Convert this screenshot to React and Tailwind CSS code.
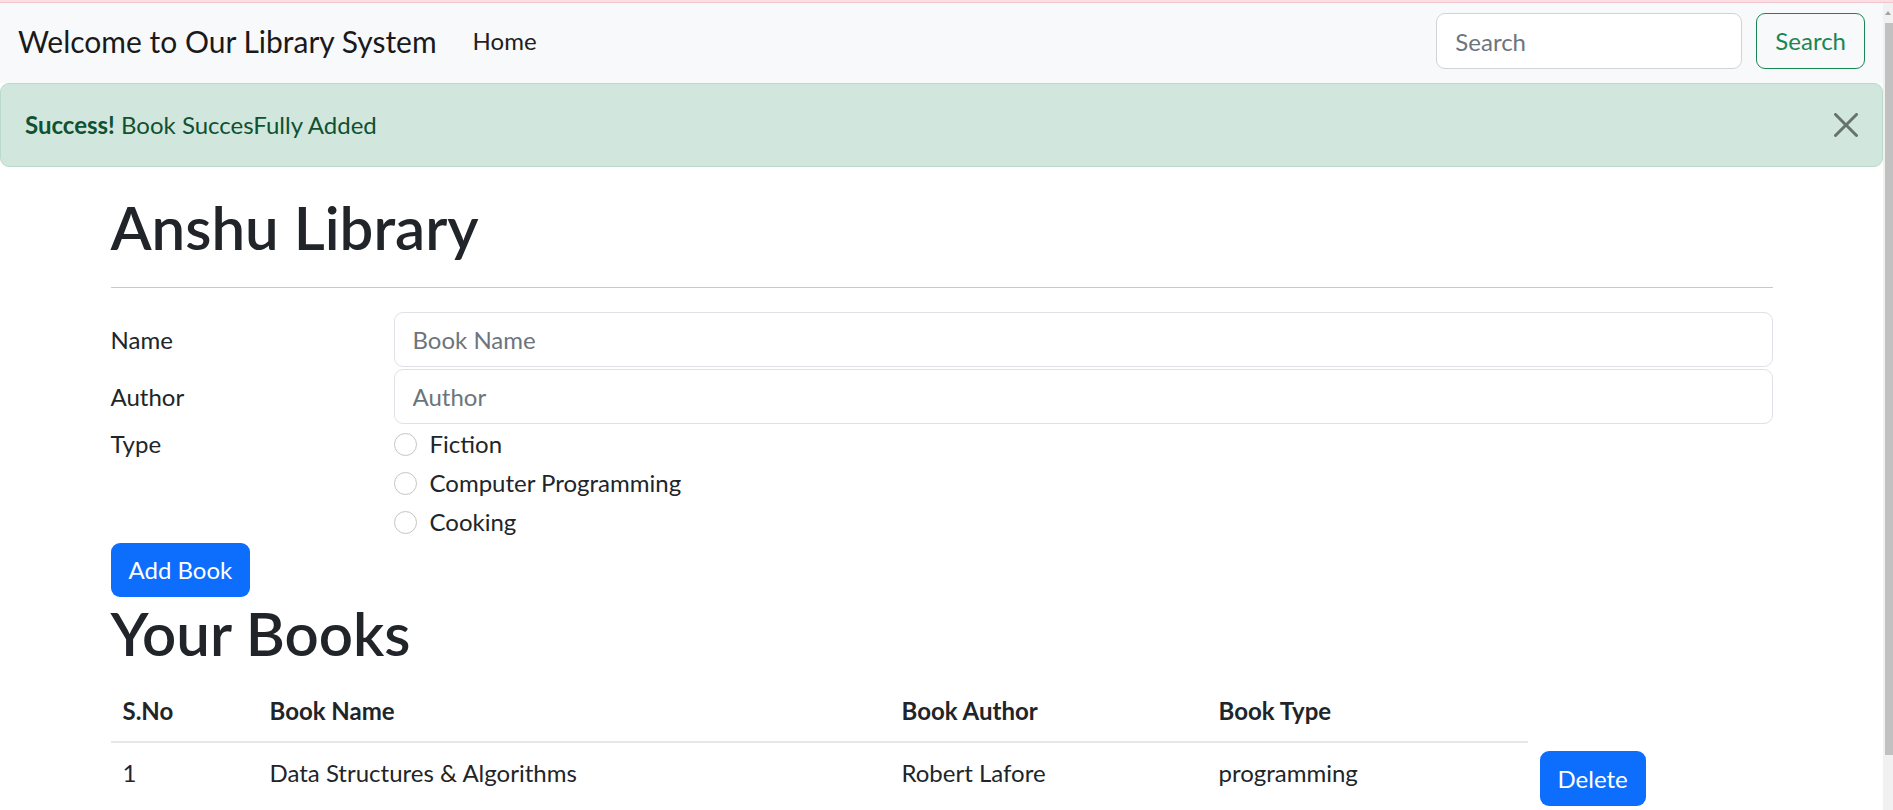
import React from 'react';

const books = [
  { name: 'Data Structures & Algorithms', author: 'Robert Lafore', type: 'programming' },
];

const types = ['Fiction', 'Computer Programming', 'Cooking'];

function CloseIcon() {
  return (
    <svg viewBox="0 0 16 16" className="w-[24px] h-[24px]" fill="currentColor">
      <path d="M.293.293a1 1 0 011.414 0L8 6.586 14.293.293a1 1 0 111.414 1.414L9.414 8l6.293 6.293a1 1 0 01-1.414 1.414L8 9.414l-6.293 6.293a1 1 0 01-1.414-1.414L6.586 8 .293 1.707a1 1 0 010-1.414z" />
    </svg>
  );
}

export default function App() {
  return (
    <div className="h-[810px] overflow-hidden flex flex-col bg-white text-[#212529] font-['Lato',sans-serif]">
      <div className="h-[3px] shrink-0 bg-[#fbdde2] border-b border-[#efc6cd]" />
      <div className="flex flex-1 min-h-0">
        <div className="flex-1 min-w-0">
          {/* navbar */}
          <nav className="h-[80px] bg-[#f8f9fa] px-[18px] pt-[10px] pb-[14px] flex items-center justify-between">
            <div className="flex items-center">
              <span className="text-[30px] leading-[45px] text-[#1a1a1a] mr-[24px]">Welcome to Our Library System</span>
              <a className="text-[24px] leading-[36px] px-[12px] text-[#1f1f1f]">Home</a>
            </div>
            <form className="flex items-center">
              <input
                placeholder="Search"
                className="w-[306px] h-[56px] px-[18px] text-[24px] bg-white border border-[#ced4da] rounded-[9px] placeholder:text-[#6c757d] outline-none"
              />
              <button type="button" className="ml-[14px] h-[56px] px-[18px] text-[24px] text-[#198754] border border-[#198754] rounded-[9px]">
                Search
              </button>
            </form>
          </nav>

          {/* alert */}
          <div className="h-[84px] bg-[#d1e7dd] border border-[#badbcc] rounded-[9px] text-[#0f5132] text-[24px] flex items-center justify-between pl-[24px] pr-[24px]">
            <div>
              <strong className="font-bold">Success!</strong> Book SuccesFully Added
            </div>
            <button type="button" className="text-[#000] opacity-50">
              <CloseIcon />
            </button>
          </div>

          {/* main */}
          <div className="w-[1662px] mx-auto pt-[24px] text-[24px] leading-[36px]">
            <h1 className="text-[60px] leading-[72px] font-semibold mb-[12px]">Anshu Library</h1>
            <hr className="border-t border-[#c8c9ca] my-[24px]" />

            <div className="flex items-start mb-[2px]">
              <label className="w-[283px] pt-[10px] pb-[9px]">Name</label>
              <input placeholder="Book Name" className="flex-1 h-[55px] px-[18px] text-[24px] border border-[#dee2e6] rounded-[9px] placeholder:text-[#6c757d] outline-none" />
            </div>
            <div className="flex items-start mb-[2px]">
              <label className="w-[283px] pt-[10px] pb-[9px]">Author</label>
              <input placeholder="Author" className="flex-1 h-[55px] px-[18px] text-[24px] border border-[#dee2e6] rounded-[9px] placeholder:text-[#6c757d] outline-none" />
            </div>
            <div className="flex items-start">
              <span className="w-[283px]">Type</span>
              <div className="flex-1 flex flex-col">
                {types.map((t) => (
                  <label key={t} className="flex items-center h-[36px] mb-[3px]">
                    <span className="w-[23px] h-[23px] rounded-full border border-[#c4c4c4] bg-white mr-[13px]" />
                    {t}
                  </label>
                ))}
              </div>
            </div>

            <button type="button" className="h-[54px] px-[18px] bg-[#0d6efd] text-white rounded-[9px]">Add Book</button>

            <h1 className="text-[60px] leading-[72px] font-semibold mb-[12px]">Your Books</h1>

            <table className="w-full table-fixed border-collapse text-left">
              <colgroup>
                <col className="w-[147px]" />
                <col className="w-[632px]" />
                <col className="w-[317px]" />
                <col className="w-[321px]" />
                <col />
              </colgroup>
              <thead>
                <tr>
                  <th className="p-[12px] font-bold border-b-2 border-[#e6e6e6] align-bottom">S.No</th>
                  <th className="p-[12px] font-bold border-b-2 border-[#e6e6e6] align-bottom">Book Name</th>
                  <th className="p-[12px] font-bold border-b-2 border-[#e6e6e6] align-bottom">Book Author</th>
                  <th className="p-[12px] font-bold border-b-2 border-[#e6e6e6] align-bottom">Book Type</th>
                </tr>
              </thead>
              <tbody>
                {books.map((b, i) => (
                  <tr key={i} className="align-top">
                    <td className="p-[12px]">{i + 1}</td>
                    <td className="p-[12px]">{b.name}</td>
                    <td className="p-[12px]">{b.author}</td>
                    <td className="p-[12px]">{b.type}</td>
                    <td className="pt-[9px] px-[12px] pb-[12px]">
                      <button type="button" className="h-[55px] px-[18px] bg-[#0d6efd] text-white rounded-[9px]">Delete</button>
                    </td>
                  </tr>
                ))}
              </tbody>
            </table>
          </div>
        </div>

        {/* scrollbar */}
        <div className="w-[10px] shrink-0 bg-[#f1f1f1] flex flex-col items-end">
          <div className="w-full h-[20px] flex items-center justify-center">
            <div className="w-0 h-0 border-l-[3px] border-r-[3px] border-b-[4px] border-l-transparent border-r-transparent border-b-[#a3a3a3]" />
          </div>
          <div className="w-[8px] h-[732px] bg-[#c1c1c1]" />
        </div>
      </div>
    </div>
  );
}
